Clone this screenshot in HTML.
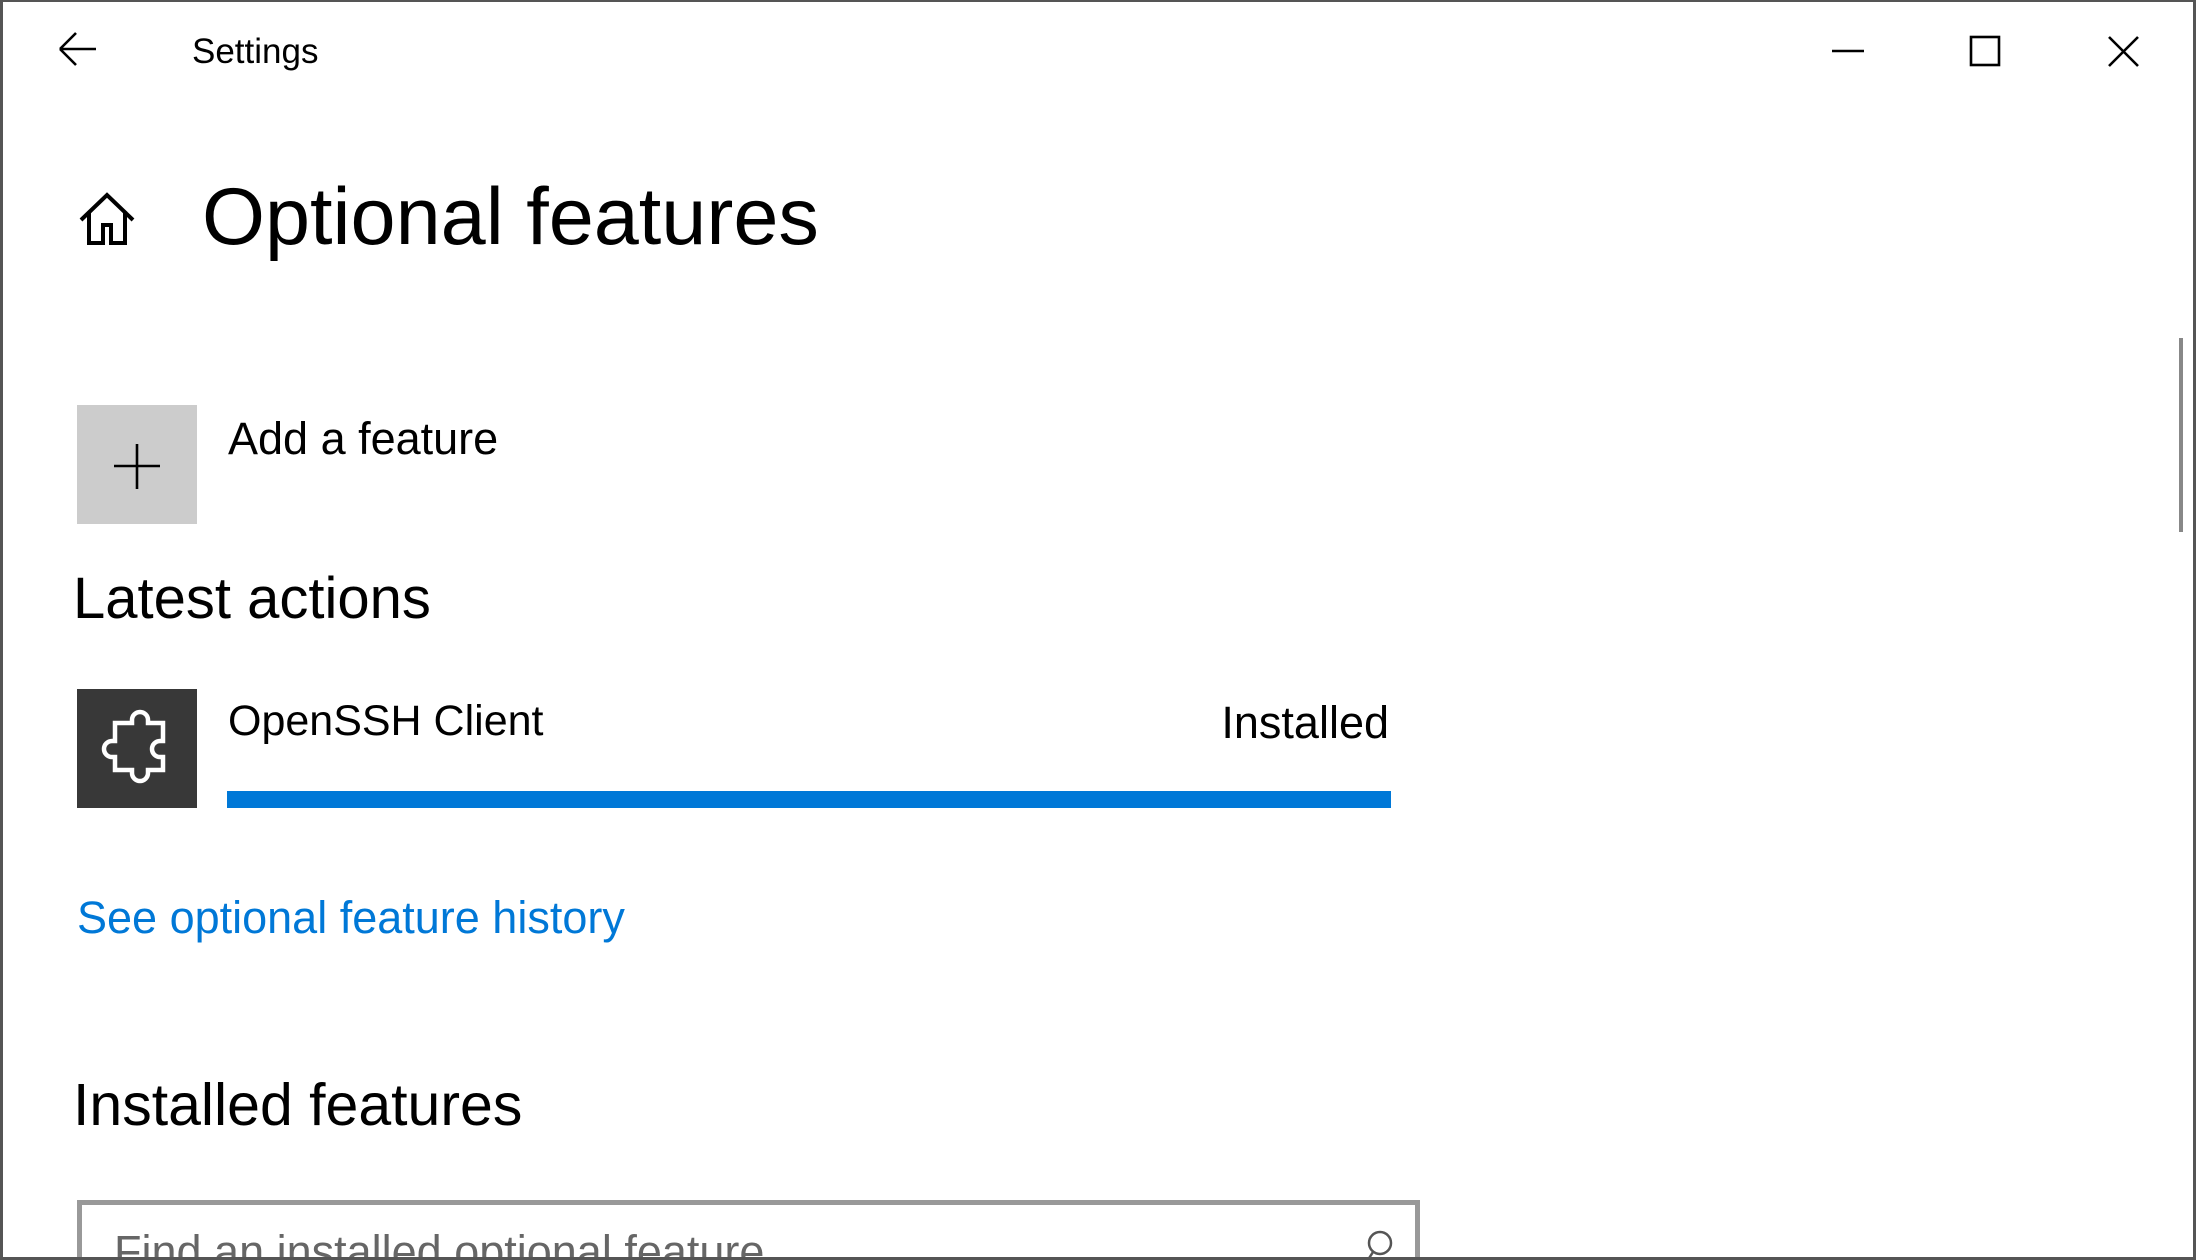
<!DOCTYPE html>
<html style="overflow:hidden;width:2196px;height:1260px;"><head><meta charset="utf-8"><style>
html,body{margin:0;padding:0;}
body{width:2196px;height:1260px;position:relative;overflow:hidden;background:#fff;font-family:"Liberation Sans",sans-serif;color:#000;}
.frame{position:absolute;left:0;top:0;width:2196px;height:1260px;box-sizing:border-box;border:3px solid #555;border-top-width:2px;z-index:5;pointer-events:none;}
.t{position:absolute;white-space:nowrap;line-height:1;}
</style></head><body>
<div class="frame"></div>
<svg style="position:absolute;left:56px;top:30px" width="44" height="40" viewBox="0 0 44 40"><path d="M4 19H40M4 19L20 3M4 19L20 35" stroke="#000" stroke-width="2.6" fill="none"/></svg>
<div class="t" style="left:192px;top:34px;font-size:35px;">Settings</div>
<svg style="position:absolute;left:1830px;top:36px" width="36" height="30"><path d="M2 15H34" stroke="#000" stroke-width="2.4"/></svg>
<svg style="position:absolute;left:1968px;top:34px" width="36" height="34"><rect x="3" y="3" width="28" height="28" stroke="#000" stroke-width="2.6" fill="none"/></svg>
<svg style="position:absolute;left:2106px;top:34px" width="36" height="34"><path d="M3 3L32 32M32 3L3 32" stroke="#000" stroke-width="2.6"/></svg>
<svg style="position:absolute;left:78px;top:192px" width="58" height="54" viewBox="0 0 58 54"><path d="M3 28L29 3L55 28M11 21V51H25V33H33V51H47V21" stroke="#000" stroke-width="4" fill="none"/></svg>
<div class="t" style="left:202px;top:177px;font-size:81px;">Optional features</div>
<div style="position:absolute;left:77px;top:405px;width:120px;height:119px;background:#ccc;"></div>
<svg style="position:absolute;left:77px;top:405px" width="120" height="119"><path d="M60 39V84M37 61H83" stroke="#000" stroke-width="2.6"/></svg>
<div class="t" style="left:228px;top:416px;font-size:45px;">Add a feature</div>
<div class="t" style="left:73px;top:570px;font-size:58px;">Latest actions</div>
<div style="position:absolute;left:77px;top:689px;width:120px;height:119px;background:#383838;"></div>
<svg style="position:absolute;left:77px;top:689px" width="120" height="119" viewBox="0 0 120 119"><path d="M38 34H55V31A8 8 0 0 1 71 31V34H86V52H83A8 8 0 0 0 83 68H86V81H71V84A8 8 0 0 1 55 84V81H38V68H35A8 8 0 0 1 35 52H38Z" stroke="#fff" stroke-width="4.5" fill="none"/></svg>
<div class="t" style="left:228px;top:700px;font-size:43px;">OpenSSH Client</div>
<div class="t" style="right:807px;top:700px;font-size:45px;">Installed</div>
<div style="position:absolute;left:227px;top:791px;width:1164px;height:17px;background:#0078d7;"></div>
<div class="t" style="left:77px;top:895px;font-size:45px;color:#0078d7;">See optional feature history</div>
<div class="t" style="left:73px;top:1076px;font-size:59px;">Installed features</div>
<div style="position:absolute;left:77px;top:1200px;width:1343px;height:60px;box-sizing:border-box;border:5px solid #999;border-bottom:0;overflow:hidden;">
<div class="t" style="left:32px;top:24px;font-size:45px;color:#666;">Find an installed optional feature</div>
<svg style="position:absolute;left:1276px;top:24px" width="40" height="34"><circle cx="22" cy="14" r="11" stroke="#555" stroke-width="2.5" fill="none"/><path d="M15 23L8 34" stroke="#555" stroke-width="2.5"/></svg>
</div>
<div style="position:absolute;left:2179px;top:338px;width:4px;height:194px;background:#888;"></div>
</body></html>
